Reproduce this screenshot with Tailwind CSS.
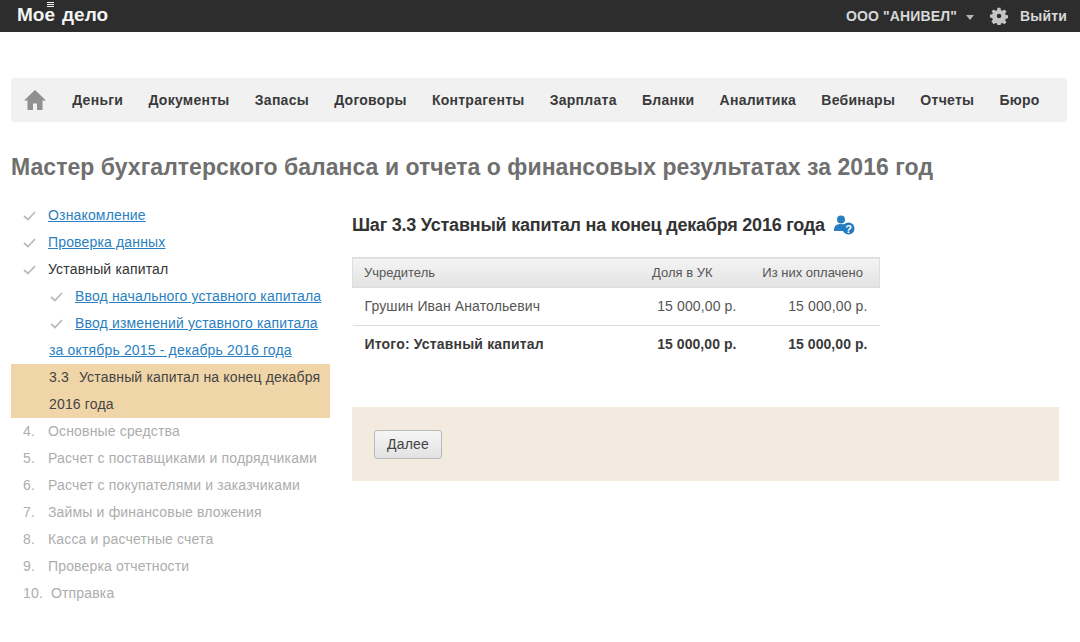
<!DOCTYPE html>
<html lang="ru">
<head>
    <meta charset="UTF-8">
    <title>Мастер бухгалтерского баланса</title>
    <script src="https://cdn.jsdelivr.net/npm/@tailwindcss/browser@4"></script>
</head>
<body class="bg-white font-['Liberation_Sans',Arial,sans-serif] text-[14px] text-[#333] h-[642px] overflow-hidden">
    <header class="h-8 bg-[#2d2d2d] flex items-center justify-between pl-[17px] pr-[13px]">
        <div class="flex items-baseline text-[#f4f4f4] font-bold text-[19px] leading-none mt-[-3px]">
            <span class="relative">Мое<i class="absolute left-[30px] top-[-3px] w-[7px] h-[5px] border-y border-[#f4f4f4]"></i><i class="absolute left-[30px] top-[-1px] w-[7px] h-px bg-[#f4f4f4]"></i></span>
            <span class="ml-[7px]">дело</span>
        </div>
        <div class="flex items-center text-[#d8d8d8] font-bold tracking-[0.15px]">
            <span>ООО "АНИВЕЛ"</span>
            <svg class="w-2 h-[5px] ml-[9px] mt-[2px]" viewBox="0 0 8 5"><path d="M0 0H8L4 5Z" fill="#b5b5b5"/></svg>
            <svg class="w-[18px] h-[18px] ml-[16px]" viewBox="0 0 24 24" fill="#c4c4c4"><path fill-rule="evenodd" d="M10 1h4l.6 3.200 1.900.8L19.200 3.200l2.800 2.800-1.800 2.700.8 1.900 3 .4v4l-3 .6-.8 1.900 1.800 2.700-2.800 2.800-2.700-1.800-1.900.8-.6 3h-4l-.6-3-1.900-.8-2.700 1.800L2 19.200l1.800-2.700-.8-1.900-3-.6v-4l3-.4.8-1.900L2 6l2.800-2.800 2.700 1.800 1.900-.8zM12 9a3 3 0 1 0 0 6 3 3 0 0 0 0-6z"/></svg>
            <span class="ml-[12px]">Выйти</span>
        </div>
    </header>

    <nav class="mt-[46px] mx-[11px] h-11 w-[1056px] bg-[#f1f1f1] rounded-[3px] flex items-center pl-[13px] font-bold text-[#3a3a3a] tracking-[0.27px] gap-[25.2px]">
        <svg class="w-[22px] h-[20px] mr-px" viewBox="0 0 22 20" fill="#909090"><path d="M11 0L22 10.500H18.500V20H13V13.500H9V20H3.500V10.500H0Z"/></svg>
        <a>Деньги</a>
        <a>Документы</a>
        <a>Запасы</a>
        <a>Договоры</a>
        <a>Контрагенты</a>
        <a>Зарплата</a>
        <a>Бланки</a>
        <a>Аналитика</a>
        <a>Вебинары</a>
        <a>Отчеты</a>
        <a>Бюро</a>
    </nav>

    <h1 class="mt-[31px] ml-[11px] text-[23px] leading-[28px] font-bold text-[#6f6f6f] tracking-[0.04px]">Мастер бухгалтерского баланса и отчета о финансовых результатах за 2016 год</h1>

    <div class="flex mt-[21px] ml-[11px]">
        <aside class="w-[319px] leading-[27px] tracking-[0.16px]">
            <div class="flex items-center pl-[12px] h-[27px]">
                <svg class="w-[13px] h-[10px] mr-[12px]" viewBox="0 0 13 10" fill="none" stroke="#bbbbbb" stroke-width="1.800"><path d="M1 5L5 8.500L12 1"/></svg>
                <a class="text-[#2a7fc0] underline">Ознакомление</a>
            </div>
            <div class="flex items-center pl-[12px] h-[27px]">
                <svg class="w-[13px] h-[10px] mr-[12px]" viewBox="0 0 13 10" fill="none" stroke="#bbbbbb" stroke-width="1.800"><path d="M1 5L5 8.500L12 1"/></svg>
                <a class="text-[#2a7fc0] underline">Проверка данных</a>
            </div>
            <div class="flex items-center pl-[12px] h-[27px]">
                <svg class="w-[13px] h-[10px] mr-[12px]" viewBox="0 0 13 10" fill="none" stroke="#bbbbbb" stroke-width="1.800"><path d="M1 5L5 8.500L12 1"/></svg>
                <span>Уставный капитал</span>
            </div>
            <div class="flex items-center pl-[39px] h-[27px]">
                <svg class="w-[13px] h-[10px] mr-[12px]" viewBox="0 0 13 10" fill="none" stroke="#bbbbbb" stroke-width="1.800"><path d="M1 5L5 8.500L12 1"/></svg>
                <a class="text-[#2a7fc0] underline">Ввод начального уставного капитала</a>
            </div>
            <div class="flex items-center pl-[39px] h-[27px]">
                <svg class="w-[13px] h-[10px] mr-[12px]" viewBox="0 0 13 10" fill="none" stroke="#bbbbbb" stroke-width="1.800"><path d="M1 5L5 8.500L12 1"/></svg>
                <a class="text-[#2a7fc0] underline">Ввод изменений уставного капитала</a>
            </div>
            <div class="pl-[38px] h-[27px]">
                <a class="text-[#2a7fc0] underline">за октябрь 2015 - декабрь 2016 года</a>
            </div>
            <div class="bg-[#f0d5a8] pl-[38px] h-[54px] text-[#444]">
                <div class="flex"><span class="w-[30px]">3.3</span>Уставный капитал на конец декабря</div>
                <div>2016 года</div>
            </div>
            <ol class="text-[#adadad]">
                <li class="pl-[12px] flex"><span class="w-[25px]">4.</span>Основные средства</li>
                <li class="pl-[12px] flex"><span class="w-[25px]">5.</span>Расчет с поставщиками и подрядчиками</li>
                <li class="pl-[12px] flex"><span class="w-[25px]">6.</span>Расчет с покупателями и заказчиками</li>
                <li class="pl-[12px] flex"><span class="w-[25px]">7.</span>Займы и финансовые вложения</li>
                <li class="pl-[12px] flex"><span class="w-[25px]">8.</span>Касса и расчетные счета</li>
                <li class="pl-[12px] flex"><span class="w-[25px]">9.</span>Проверка отчетности</li>
                <li class="pl-[12px] flex"><span class="w-[28px]">10.</span>Отправка</li>
            </ol>
        </aside>

        <main class="ml-[22px] w-[707px] mt-[11px]">
            <div class="flex items-center h-[24px]">
                <h2 class="text-[18px] font-bold text-[#333] tracking-[-0.22px]">Шаг 3.3 Уставный капитал на конец декабря 2016 года</h2>
                <svg class="w-[21px] h-[20px] ml-[9px]" viewBox="0 0 21 20">
                    <circle cx="7" cy="4.500" r="4" fill="#2a7fc0"/>
                    <path d="M0 15C0 10.500 3 9 7 9C11 9 13 10.500 13 12L9 16H0Z" fill="#2a7fc0"/>
                    <circle cx="14.500" cy="13.500" r="6" fill="#1f7cc4"/>
                    <text x="14.500" y="17.500" text-anchor="middle" font-size="11" font-weight="700" fill="#fff">?</text>
                </svg>
            </div>

            <table class="mt-[20px] w-[528px] border-collapse">
                <thead>
                    <tr class="h-[30px] bg-linear-to-b from-[#f4f4f4] to-[#e3e3e3] border border-[#dedede] text-[13px] text-[#555]">
                        <th class="pl-[11px] text-left font-normal">Учредитель</th>
                        <th class="w-[131px] pr-9 text-right font-normal">Доля в УК</th>
                        <th class="w-[131px] pr-[16px] text-right font-normal">Из них оплачено</th>
                    </tr>
                </thead>
                <tbody>
                    <tr class="h-[38px] border-b border-[#dedede] text-[#555] tracking-[0.12px]">
                        <td class="pl-3">Грушин Иван Анатольевич</td>
                        <td class="pr-3 text-right">15 000,00 р.</td>
                        <td class="pr-3 text-right">15 000,00 р.</td>
                    </tr>
                    <tr class="h-[37px] font-bold text-[#3a3a3a] tracking-[0.06px]">
                        <td class="pl-3 tracking-[0.18px]">Итого: Уставный капитал</td>
                        <td class="pr-3 text-right">15 000,00 р.</td>
                        <td class="pr-3 text-right">15 000,00 р.</td>
                    </tr>
                </tbody>
            </table>

            <div class="mt-[44px] h-[74px] bg-[#f3ebdf] pl-[22px] pt-[23px]">
                <button class="w-[68px] h-[29px] border border-[#b9b9b9] rounded-[3px] bg-linear-to-b from-[#f6f6f6] to-[#e2e2e2] text-[#444] tracking-[0.16px]">Далее</button>
            </div>
        </main>
    </div>
</body>
</html>
